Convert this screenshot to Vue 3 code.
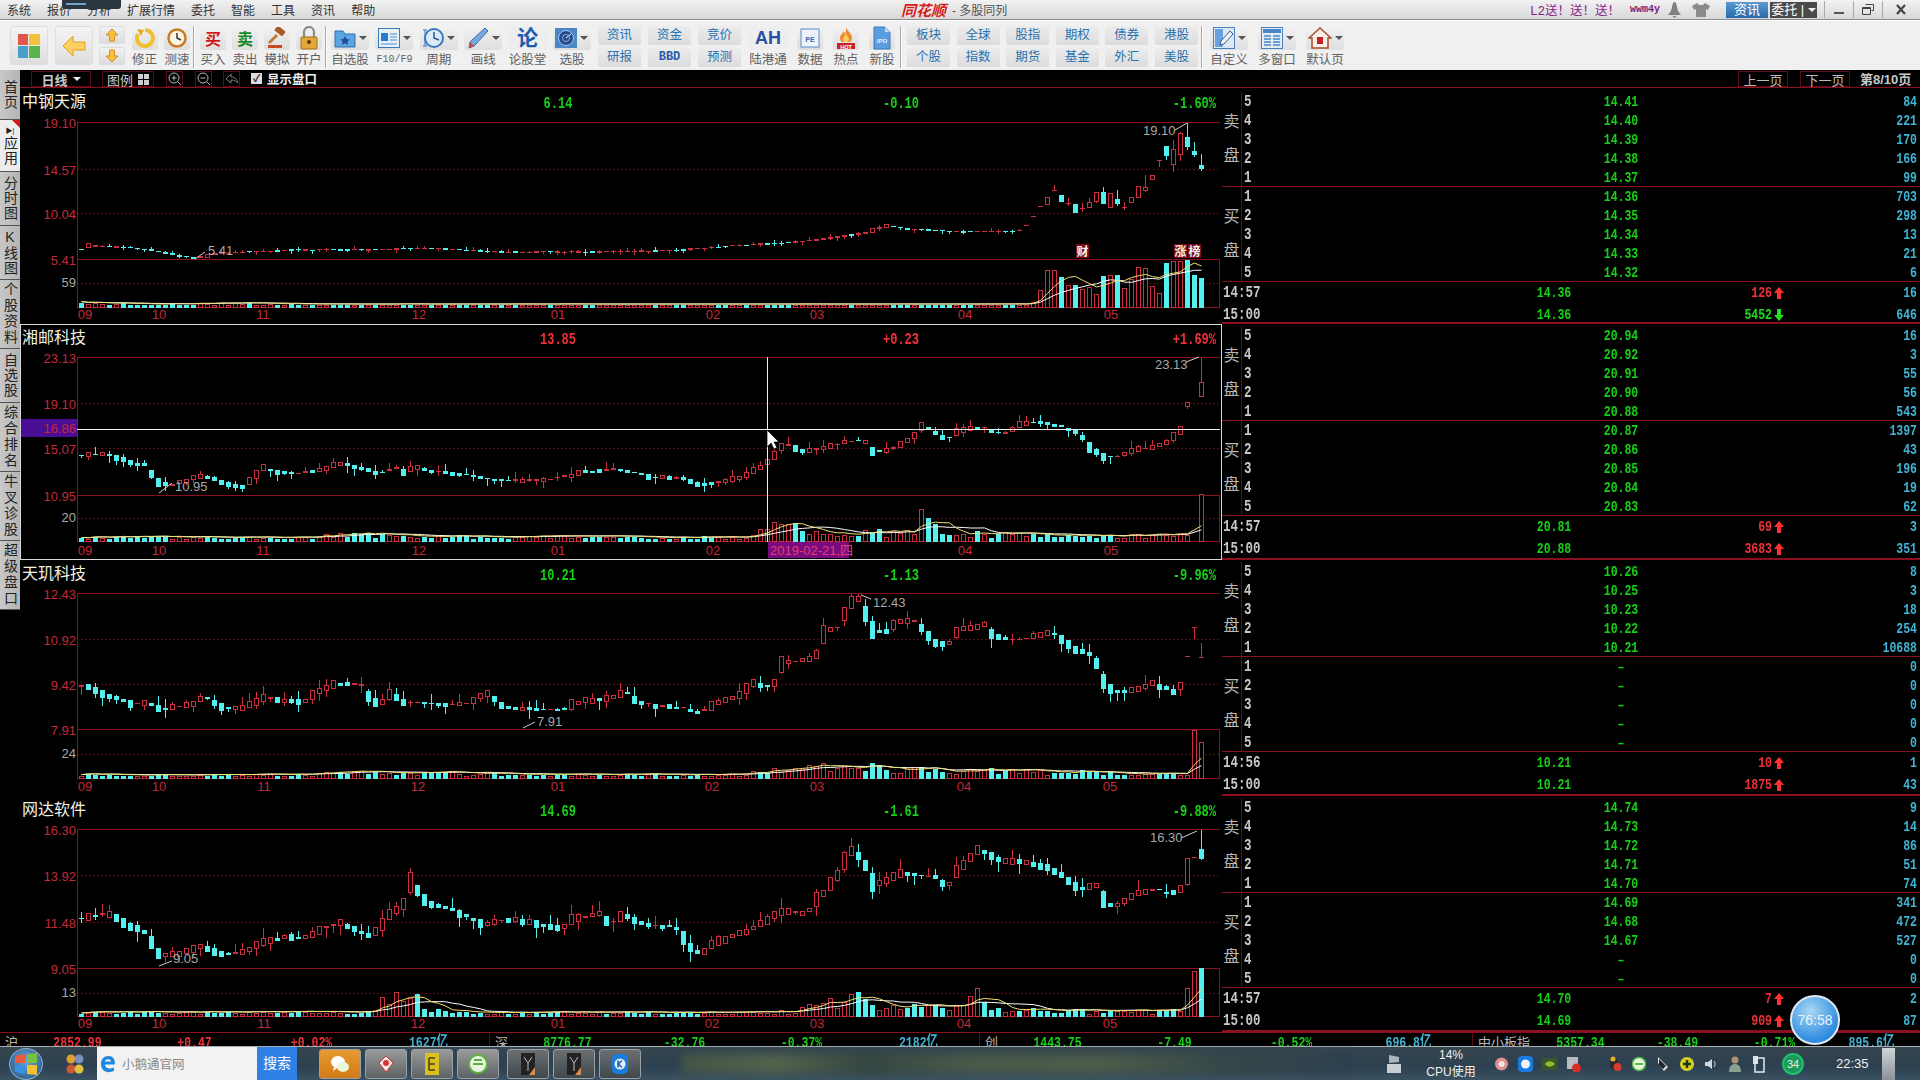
<script setup>
function rng(seed) {
  let s = seed
  return () => {
    s = (s * 16807) % 2147483647
    return (s % 100000) / 100000
  }
}
function interp(keys, x) {
  if (x <= keys[0][0]) return keys[0][1]
  for (let i = 1; i < keys.length; i++) {
    if (x <= keys[i][0]) {
      const [x0, y0] = keys[i - 1]
      const [x1, y1] = keys[i]
      return y0 + ((y1 - y0) * (x - x0)) / (x1 - x0)
    }
  }
  return keys[keys.length - 1][1]
}
const zk = (list, top) => list.map(([zx, zy]) => [20 + zx / 1.296, top + zy / 3])
const zc = (x, o, c, hi, lo) => ({ x, o: 80 + o / 3, c: 80 + c / 3, hi: 80 + hi / 3, lo: 80 + lo / 3 })

const defs = [
  {
    name: '中钢天源', last: '6.14', chg: '-0.10', pct: '-1.60%', tone: 'g', seed: 11, top: 88,
    grid: [122, 169, 213, 259, 283, 307], dateY: 319,
    labels: ['19.10', '14.57', '10.04', '5.41'], volLabel: '59',
    jit: 0.6, body: 1.6, wick: 3, end: 1020,
    keys: [[81, 249], [88, 245], [130, 248], [150, 250], [170, 254], [195, 258], [220, 253], [250, 252], [300, 250], [350, 250], [400, 249], [430, 248], [500, 252], [600, 252], [680, 250], [747, 245], [800, 242], [860, 234], [888, 225], [906, 229], [960, 232], [1020, 231]],
    extra: [zc(1026, 437, 435, 435, 437), zc(1033, 411, 409, 409, 411), zc(1040, 381, 379, 379, 381), zc(1047, 372, 350, 350, 375), zc(1054, 332, 329, 315, 332), zc(1061, 345, 365, 345, 367), zc(1068, 372, 368, 355, 378), zc(1075, 373, 398, 373, 400), zc(1082, 388, 383, 370, 395), zc(1089, 382, 367, 355, 385), zc(1096, 362, 337, 335, 368), zc(1103, 335, 372, 320, 373), zc(1110, 382, 340, 340, 384), zc(1117, 358, 372, 330, 378), zc(1124, 383, 381, 365, 390), zc(1131, 367, 352, 350, 370), zc(1138, 350, 317, 317, 352), zc(1145, 329, 322, 285, 335), zc(1152, 298, 284, 284, 300), zc(1159, 243, 241, 241, 262), zc(1166, 198, 228, 198, 240), zc(1173, 252, 206, 180, 275), zc(1180, 222, 158, 155, 243), zc(1187, 172, 202, 130, 210), zc(1194, 213, 226, 187, 230), zc(1201, 256, 268, 222, 272)],
    vol: [[81, 3], [90, 6], [100, 5], [130, 2], [240, 3], [300, 1.5], [1026, 1.5], [1033, 5], [1040, 17], [1047, 37], [1054, 37], [1061, 30], [1068, 22], [1075, 22], [1082, 18], [1089, 20], [1096, 13], [1103, 31], [1110, 32], [1117, 32], [1124, 19], [1131, 28], [1138, 40], [1145, 39], [1152, 21], [1159, 14], [1166, 44], [1173, 46], [1180, 46], [1187, 47], [1194, 32], [1201, 29]],
    exactFrom: 1030,
    dates: [85, 159, 263, 419, 558, 713, 817, 965, 1111],
    annots: [
      { t: '5.41', x: 208, y: 255, l: [195, 259, 205, 252] },
      { t: '19.10', x: 1143, y: 135, l: [1175, 130, 1187, 123] }
    ],
    tags: [{ t: '财', x: 1076 }, { t: '涨', x: 1174 }, { t: '榜', x: 1188 }],
    tagY: 244,
    pad: 'first',
    asks: [['14.41', '84'], ['14.40', '221'], ['14.39', '170'], ['14.38', '166'], ['14.37', '99']],
    bids: [['14.36', '703'], ['14.35', '298'], ['14.34', '13'], ['14.33', '21'], ['14.32', '6']],
    trades: [['14:57', '14.36', '126', 'up', '16'], ['15:00', '14.36', '5452', 'down', '646']]
  },
  {
    name: '湘邮科技', last: '13.85', chg: '+0.23', pct: '+1.69%', tone: 'r', seed: 29, top: 324,
    grid: [357, 403, 448, 495, 518, 541], dateY: 555,
    labels: ['23.13', '19.10', '15.07', '10.95'], volLabel: '20',
    jit: 1.5, body: 3.5, wick: 7, end: 1180,
    keys: [[80, 455], [109, 454], [118, 458], [132, 463], [144, 465], [152, 475], [160, 485], [172, 485], [201, 475], [215, 480], [241, 488], [255, 475], [264, 467], [276, 472], [299, 473], [319, 470], [339, 463], [367, 470], [379, 473], [396, 467], [402, 473], [413, 467], [436, 472], [471, 475], [488, 479], [522, 481], [545, 480], [563, 477], [580, 472], [620, 469], [649, 477], [683, 478], [697, 485], [712, 483], [741, 477], [763, 465], [775, 455], [782, 445], [792, 445], [798, 452], [821, 448], [844, 442], [864, 440], [872, 452], [895, 448], [913, 437], [920, 425], [934, 433], [943, 438], [950, 437], [958, 430], [972, 428], [984, 428], [993, 432], [1006, 433], [1020, 423], [1034, 423], [1048, 423], [1062, 427], [1075, 433], [1082, 438], [1089, 447], [1103, 457], [1117, 457], [1130, 450], [1148, 448], [1165, 443], [1180, 430]],
    extra: [{ x: 1187, o: 406, c: 402, hi: 402, lo: 409 }, { x: 1201, o: 396, c: 382, hi: 358, lo: 396 }],
    vol: [[81, 3], [300, 3], [330, 5], [360, 6], [420, 4], [700, 3], [750, 5], [767, 14], [780, 22], [800, 12], [820, 6], [860, 9], [915, 7], [920, 25], [928, 17], [940, 8], [1000, 6], [1180, 5], [1187, 6], [1201, 47]],
    exactFrom: 1187,
    dates: [85, 159, 263, 419, 558, 713, 965, 1111],
    dateNames: ['09', '10', '11', '12', '01', '02', '04', '05'],
    annots: [
      { t: '10.95', x: 175, y: 491, l: [159, 493, 172, 483] },
      { t: '23.13', x: 1155, y: 369, l: [1186, 362, 1199, 357] }
    ],
    tags: [], tagY: 0, active: true,
    asks: [['20.94', '16'], ['20.92', '3'], ['20.91', '55'], ['20.90', '56'], ['20.88', '543']],
    bids: [['20.87', '1397'], ['20.86', '43'], ['20.85', '196'], ['20.84', '19'], ['20.83', '62']],
    trades: [['14:57', '20.81', '69', 'up', '3'], ['15:00', '20.88', '3683', 'up', '351']]
  },
  {
    name: '天玑科技', last: '10.21', chg: '-1.13', pct: '-9.96%', tone: 'g', seed: 47, top: 560,
    grid: [593, 639, 684, 729, 754, 778], dateY: 791,
    labels: ['12.43', '10.92', '9.42', '7.91'], volLabel: '24',
    jit: 2, body: 5, wick: 9, end: 1180,
    keys: zk([[80, 375], [100, 395], [125, 415], [145, 432], [165, 425], [180, 450], [205, 440], [225, 430], [240, 410], [260, 445], [285, 445], [315, 415], [345, 420], [365, 425], [385, 395], [405, 370], [425, 375], [440, 365], [450, 405], [465, 435], [480, 400], [495, 430], [520, 425], [550, 435], [580, 430], [605, 400], [625, 440], [655, 445], [690, 450], [705, 445], [720, 425], [760, 415], [785, 395], [800, 425], [830, 440], [860, 445], [880, 460], [900, 430], [930, 405], [950, 370], [975, 380], [985, 310], [1010, 300], [1030, 295], [1042, 210], [1060, 200], [1075, 130], [1087, 115], [1097, 170], [1105, 215], [1120, 215], [1140, 180], [1160, 180], [1175, 225], [1190, 260], [1205, 245], [1215, 210], [1250, 195], [1260, 230], [1295, 240], [1320, 220], [1340, 220], [1365, 270], [1385, 280], [1395, 315], [1404, 370], [1415, 395], [1440, 390], [1465, 370], [1485, 385], [1495, 395], [1505, 375]], 560),
    extra: [{ x: 1187, o: 656.5, c: 656, hi: 656, lo: 656.5 }, { x: 1194, o: 627.5, c: 627, hi: 627, lo: 639 }, { x: 1201, o: 658, c: 657, hi: 643, lo: 658 }],
    vol: [[81, 3], [116, 2], [305, 2.5], [352, 6], [400, 5], [560, 3], [637, 3], [714, 2], [745, 4], [776, 7], [815, 11], [850, 15], [885, 9], [985, 7], [1100, 5], [1180, 3], [1187, 3], [1194, 48], [1201, 36]],
    exactFrom: 1187,
    dates: [85, 159, 264, 418, 558, 712, 817, 964, 1110],
    annots: [
      { t: '12.43', x: 873, y: 607, l: [861, 595, 871, 599] },
      { t: '7.91', x: 537, y: 726, l: [523, 728, 535, 722] }
    ],
    tags: [], tagY: 0,
    asks: [['10.26', '8'], ['10.25', '3'], ['10.23', '18'], ['10.22', '254'], ['10.21', '10688']],
    bids: [['–', '0'], ['–', '0'], ['–', '0'], ['–', '0'], ['–', '0']],
    trades: [['14:56', '10.21', '10', 'up', '1'], ['15:00', '10.21', '1875', 'up', '43']]
  },
  {
    name: '网达软件', last: '14.69', chg: '-1.61', pct: '-9.88%', tone: 'g', seed: 83, top: 796,
    grid: [829, 875, 922, 968, 993, 1016], dateY: 1028,
    labels: ['16.30', '13.92', '11.48', '9.05'], volLabel: '13',
    jit: 2, body: 6, wick: 10, end: 1180,
    keys: zk([[80, 365], [115, 350], [130, 375], [145, 395], [160, 405], [170, 440], [180, 480], [210, 470], [235, 450], [260, 475], [295, 465], [310, 440], [345, 420], [365, 430], [385, 405], [415, 380], [435, 400], [455, 420], [470, 380], [480, 350], [495, 330], [505, 255], [515, 285], [525, 320], [550, 335], [585, 365], [600, 385], [640, 370], [660, 380], [700, 400], [715, 370], [750, 350], [765, 385], [780, 355], [800, 380], [850, 395], [860, 430], [870, 460], [880, 475], [900, 440], [940, 405], [965, 375], [985, 345], [1020, 348], [1032, 310], [1042, 285], [1060, 235], [1075, 155], [1085, 180], [1095, 210], [1105, 265], [1125, 250], [1140, 230], [1165, 235], [1185, 240], [1200, 275], [1215, 220], [1240, 160], [1250, 170], [1270, 195], [1300, 195], [1330, 215], [1350, 235], [1370, 280], [1395, 265], [1405, 320], [1420, 330], [1445, 290], [1480, 280], [1490, 300], [1503, 275]], 796),
    extra: [{ x: 1187, o: 884, c: 858, hi: 858, lo: 886 }, { x: 1194, o: 858, c: 857, hi: 857, lo: 858 }, { x: 1201, o: 849, c: 859, hi: 830, lo: 860 }],
    vol: [[81, 3], [365, 3], [375, 5], [386, 18], [405, 27], [415, 18], [425, 7], [450, 3], [770, 3], [800, 6], [835, 14], [850, 30], [860, 14], [880, 8], [925, 9], [960, 7], [977, 22], [985, 14], [1000, 7], [1100, 4], [1180, 5], [1187, 28], [1194, 45], [1201, 48]],
    exactFrom: 1187,
    dates: [85, 159, 264, 418, 558, 712, 817, 964, 1110],
    annots: [
      { t: '16.30', x: 1150, y: 842, l: [1181, 838, 1197, 831] },
      { t: '9.05', x: 173, y: 963, l: [159, 966, 172, 961] }
    ],
    tags: [], tagY: 0,
    asks: [['14.74', '9'], ['14.73', '14'], ['14.72', '86'], ['14.71', '51'], ['14.70', '74']],
    bids: [['14.69', '341'], ['14.68', '472'], ['14.67', '527'], ['–', '0'], ['–', '0']],
    trades: [['14:57', '14.70', '7', 'up', '2'], ['15:00', '14.69', '909', 'up', '87']]
  }
]
const monthNames = ['09', '10', '11', '12', '01', '02', '03', '04', '05']

function build(d) {
  const r = rng(d.seed)
  const candles = []
  let prev = interp(d.keys, 81)
  const floorY = d.grid[3] - 1
  for (let x = 81; x <= d.end; x += 7) {
    const y = interp(d.keys, x) + (r() - 0.5) * d.jit
    const dy = y - prev
    const mag = Math.abs(dy)
    const size = Math.max(1, mag * 0.8 + r() * d.body)
    let up = dy < 0
    if (mag < 1 && r() < 0.4) up = !up
    const top = y - size / 2
    const bot = y + size / 2
    const hi = Math.max(d.grid[0] + 1, top - (r() < 0.55 ? r() * d.wick : 0))
    const lo = Math.min(floorY, bot + (r() < 0.55 ? r() * d.wick : 0))
    candles.push({ x, top, bot, hi, lo, up })
    prev = y
  }
  for (const e of d.extra) {
    candles.push({ x: e.x, top: Math.min(e.o, e.c), bot: Math.max(e.o, e.c), hi: e.hi, lo: e.lo, up: e.c <= e.o })
  }
  const base = d.grid[5]
  const vols = candles.map((c) => {
    const raw = interp(d.vol, c.x)
    const h = c.x >= d.exactFrom ? raw : raw * (0.5 + r() * 1.0)
    return { x: c.x, h: Math.max(2, h), up: c.up }
  })
  const ma = (n) =>
    vols
      .map((v, i) => {
        const s = vols.slice(Math.max(0, i - n + 1), i + 1)
        const avg = s.reduce((a, b) => a + b.h, 0) / s.length
        return `${v.x + 0.5},${(base - avg - 1).toFixed(1)}`
      })
      .join(' ')
  const box = (c) => ({
    x: Math.round(c.x) - 2,
    y: Math.round(c.top),
    h: Math.max(1, Math.round(c.bot) - Math.round(c.top))
  })
  return {
    ...d,
    names: d.dateNames || monthNames,
    candles: candles.map((c) => ({ ...c, b: box(c), hiR: Math.round(c.hi), loR: Math.round(c.lo) })),
    vols: vols.map((v) => ({ ...v, y: Math.round(base - v.h), hR: Math.round(v.h) })),
    ma5: ma(5),
    ma10: ma(10),
    vb: `20 ${d.top + 34} 1202 202`
  }
}
const panels = defs.map(build)

const sideTabs = [
  { t: '首页' }, { t: '应用', on: true }, { t: '分时图' }, { t: 'K线图' },
  { t: '个股资料', tall: true }, { t: '自选股' }, { t: '综合排名', tall: true },
  { t: '牛叉诊股', tall: true }, { t: '超级盘口', tall: true }
]
const menus = ['系统', '报价', '分析', '扩展行情', '委托', '智能', '工具', '资讯', '帮助']
const indexes = [
  { k: 'seg', n: '沪', tone: 'r', v: ['2852.99', '+0.47', '+0.02%'], amt: '1627亿' },
  { k: 'seg', n: '深', tone: 'g', v: ['8776.77', '-32.76', '-0.37%'], amt: '2182亿' },
  { k: 'seg', n: '创', tone: 'g', v: ['1443.75', '-7.49', '-0.52%'], amt: '696.8亿' },
  { k: 'seg wide', n: '中小板指', tone: 'g', v: ['5357.34', '-38.49', '-0.71%'], amt: '895.6亿' }
]
const pairs1 = [['资讯', '研报'], ['资金', 'BBD'], ['竞价', '预测']]
const pairs2 = [['板块', '个股'], ['全球', '指数'], ['股指', '期货'], ['期权', '基金'], ['债券', '外汇'], ['港股', '美股']]
</script>

<template>
  <div class="app">
    <header class="titlebar">
      <nav class="menus"><span v-for="m in menus" :key="m">{{ m }}</span></nav>
      <div class="popbar"><i></i></div>
      <div class="brand"><b class="logo">同花顺</b><span>- 多股同列</span></div>
      <div class="promo">L2送！送！送！</div>
      <div class="user">wwm4y</div>
      <svg class="bell" width="15" height="18" viewBox="0 0 15 18"><path d="M7.5 1C9 1 9.5 3 10 6c.4 3 2 6 4 8H1c2-2 3.600-5 4-8 .5-3 1-5 2.500-5zM5.500 15h4l-2 2z" fill="#808080"/></svg>
      <svg class="shirt" width="20" height="16" viewBox="0 0 20 16"><path d="M6 1 1 4l2 4 2-1v8h10V7l2 1 2-4-5-3-2 2h-4z" fill="#8a8a8a"/></svg>
      <div class="tbtn blue">资讯</div>
      <div class="tbtn dark">委托 | <i class="tri white"></i></div>
      <div class="winbtns">
        <span class="wb"><i class="min"></i></span>
        <span class="wb"><svg width="12" height="11" viewBox="0 0 12 11"><path d="M3.500.5h8v6h-2M.5 3.500h8v7h-8zM.5 4.500h8" fill="none" stroke="#444"/></svg></span>
        <span class="wb close"><svg width="12" height="11" viewBox="0 0 12 11"><path d="M2 1l8 9M10 1l-8 9" stroke="#444" stroke-width="2.200"/></svg></span>
      </div>
    </header>

    <section class="toolbar">
      <div class="group g1">
        <div class="bigbtn"><svg width="22" height="24" viewBox="0 0 22 24"><rect x="0" width="10" height="11" fill="#e2564a"/><rect x="11" width="11" height="11" fill="#f0c23c"/><rect y="12" width="10" height="12" fill="#46a0c8"/><rect x="11" y="12" width="11" height="12" fill="#58b44c"/></svg></div>
        <div class="bigbtn"><svg width="24" height="22" viewBox="0 0 24 22"><path d="M11 1 1 11l10 10v-6h12V7H11z" fill="#fad160" stroke="#e0a020"/></svg></div>
        <div class="updown">
          <div class="ud"><svg width="14" height="14" viewBox="0 0 14 14"><path d="M7 1l6 6H9.500v6h-5V7H1z" fill="#f8c040" stroke="#d89020"/></svg></div>
          <div class="ud"><svg width="14" height="14" viewBox="0 0 14 14"><path d="M7 13 1 7h3.500V1h5v6H13z" fill="#f8c040" stroke="#d89020"/></svg></div>
        </div>
        <div class="tool nar"><div class="ico"><svg width="20" height="20" viewBox="0 0 20 20"><path d="M10 2a8 8 0 1 1-7 4" fill="none" stroke="#f0c030" stroke-width="4"/><path d="M2 1l7 1-3 6z" fill="#e8a820"/></svg></div><span class="lbl">修正</span></div>
        <div class="tool nar"><div class="ico"><svg width="20" height="20" viewBox="0 0 20 20"><circle cx="10" cy="10" r="8.500" fill="#fbf4e0" stroke="#c97a24" stroke-width="2.500"/><path d="M10 5v5l4 2" stroke="#333" stroke-width="1.500" fill="none"/></svg></div><span class="lbl">测速</span></div>
      </div>
      <i class="sep s1"></i>
      <div class="group g2">
        <div class="tool nar"><div class="ico glyph red">买</div><span class="lbl">买入</span></div>
        <div class="tool nar"><div class="ico glyph green">卖</div><span class="lbl">卖出</span></div>
        <div class="tool nar"><div class="ico"><svg width="22" height="22" viewBox="0 0 22 22"><rect x="9" y="1" width="10" height="6" rx="1" transform="rotate(40 14 4)" fill="#a85a24"/><path d="M11 8 3 16" stroke="#c07a3a" stroke-width="3"/><rect x="2" y="18" width="14" height="3" fill="#c84a20"/></svg></div><span class="lbl">模拟</span></div>
        <div class="tool nar"><div class="ico"><svg width="20" height="24" viewBox="0 0 20 24"><path d="M5 11V6a5 5 0 0 1 10 0v5" fill="none" stroke="#8a8a8a" stroke-width="2.200"/><rect x="2" y="11" width="16" height="12" rx="1" fill="#e2a838" stroke="#a06e18"/><circle cx="10" cy="16" r="2" fill="#5a3a10"/></svg></div><span class="lbl">开户</span></div>
      </div>
      <i class="sep s2"></i>
      <div class="group g3">
        <div class="tool wid"><div class="ico drop"><svg width="22" height="20" viewBox="0 0 22 20"><path d="M1 3h8l2 3h10v13H1z" fill="#5aa4e0" stroke="#2f70b0"/><path d="M11 8l1.500 3 3.200.4-2.300 2.200.6 3.200-3-1.600-3 1.600.6-3.200-2.300-2.200 3.200-.4z" fill="#1e4c9c"/></svg><i class="tri"></i></div><span class="lbl">自选股</span></div>
        <div class="tool wid"><div class="ico drop"><svg width="22" height="20" viewBox="0 0 22 20"><rect x=".5" y=".5" width="21" height="19" fill="#e8f0f8" stroke="#3a78b8"/><rect x="3" y="5" width="7" height="8" fill="#2a7ad0"/><path d="M12 6h7M12 9h7M12 12h7M3 16h16" stroke="#4a90d0"/></svg><i class="tri"></i></div><span class="lbl mono">F10/F9</span></div>
        <div class="tool wid"><div class="ico drop"><svg width="22" height="22" viewBox="0 0 22 22"><circle cx="12" cy="11" r="9" fill="#dceaf8" stroke="#3a78c0" stroke-width="2"/><path d="M12 5v6l5 2" stroke="#2a5a98" stroke-width="1.500" fill="none"/><path d="M1 3h4M3 3v16M1 19h4" stroke="#3a78c0"/></svg><i class="tri"></i></div><span class="lbl">周期</span></div>
        <div class="tool wid"><div class="ico drop"><svg width="22" height="22" viewBox="0 0 22 22"><path d="M18 1l3 3L7 19l-5 2 1-6z" fill="#78a8e0" stroke="#3a68a8"/><path d="M3 15l4 4-5 2z" fill="#d04a3a"/></svg><i class="tri"></i></div><span class="lbl">画线</span></div>
        <div class="tool wid"><div class="ico glyph lun">论</div><span class="lbl">论股堂</span></div>
        <div class="tool wid"><div class="ico drop"><svg width="22" height="20" viewBox="0 0 22 20"><rect width="22" height="20" fill="#4a86c8"/><circle cx="11" cy="10" r="7.500" fill="#2a4a88" stroke="#a0c8f0"/><path d="M11 10l5-4" stroke="#fff"/><circle cx="11" cy="10" r="3.500" fill="none" stroke="#7ab0e8"/></svg><i class="tri"></i></div><span class="lbl">选股</span></div>
      </div>
      <div class="group g4">
        <div v-for="p in pairs1" :key="p[0]" class="pair">
          <span class="pbtn">{{ p[0] }}</span>
          <span class="pbtn" :class="{ bbd: p[1] === 'BBD' }">{{ p[1] }}</span>
        </div>
      </div>
      <div class="group g5">
        <div class="tool wid"><div class="ico glyph ah">AH</div><span class="lbl">陆港通</span></div>
        <div class="tool nar"><div class="ico"><svg width="20" height="20" viewBox="0 0 20 20"><rect x="1" y="1" width="18" height="18" fill="#eef3fa" stroke="#5a8ac8"/><text x="10" y="14" class="pe">PE</text></svg></div><span class="lbl">数据</span></div>
        <div class="tool nar"><div class="ico"><svg width="20" height="24" viewBox="0 0 20 24"><path d="M10 1c1 4 6 6 6 11 0 2-1 3-2 4H6c-1-1-2-2-2-4 0-3 3-4 3-7 1 1 2 2 2 3 1-2 1-4 1-7z" fill="#ee8a30"/><path d="M10 7c0 3 3 4 3 6s-1 3-3 3-3-1-3-3 2-3 3-6z" fill="#f8d060"/><rect x="1" y="17" width="18" height="6" fill="#c8202a"/><text x="10" y="22.500" class="hot">HOT</text></svg></div><span class="lbl">热点</span></div>
        <div class="tool nar"><div class="ico"><svg width="20" height="24" viewBox="0 0 20 24"><path d="M2 1h11l5 5v17H2z" fill="#5a9ee0" stroke="#3a78c0"/><path d="M13 1v5h5" fill="#bcd8f4"/><text x="10" y="17" class="ipo">IPO</text></svg></div><span class="lbl">新股</span></div>
      </div>
      <i class="sep s3"></i>
      <div class="group g6">
        <div v-for="p in pairs2" :key="p[0]" class="pair">
          <span class="pbtn">{{ p[0] }}</span>
          <span class="pbtn">{{ p[1] }}</span>
        </div>
      </div>
      <i class="sep s4"></i>
      <div class="group g7">
        <div class="tool wid"><div class="ico drop"><svg width="22" height="22" viewBox="0 0 22 22"><rect x=".5" y=".5" width="21" height="21" fill="#dce8f4" stroke="#4a80c0"/><rect x="2" y="2" width="8" height="18" fill="#6aa0dc"/><path d="M17 4l3 3-9 10-4 1 1-4z" fill="#eef4fa" stroke="#3a5a88"/></svg><i class="tri"></i></div><span class="lbl">自定义</span></div>
        <div class="tool wid"><div class="ico drop"><svg width="22" height="22" viewBox="0 0 22 22"><rect x=".5" y=".5" width="21" height="21" fill="#e2ecf6" stroke="#4a80c0"/><rect x="2" y="2" width="18" height="4" fill="#4a86c8"/><path d="M3 9h7M3 12h7M3 15h7M3 18h7M12 9h7M12 12h7M12 15h7M12 18h7" stroke="#4a86c8" stroke-width="1.500"/></svg><i class="tri"></i></div><span class="lbl">多窗口</span></div>
        <div class="tool wid"><div class="ico drop"><svg width="24" height="22" viewBox="0 0 24 22"><path d="M12 1 1 11h3v10h16V11h3z" fill="#f4f0e8" stroke="#a84a30" stroke-width="1.500"/><rect x="9" y="10" width="6" height="7" fill="#c8202a"/></svg><i class="tri"></i></div><span class="lbl">默认页</span></div>
      </div>
    </section>

    <div class="workspace">
      <aside class="side">
        <div v-for="s in sideTabs" :key="s.t" class="stab" :class="{ on: s.on, tall: s.tall }">
          <i v-if="s.on" class="play">▶|</i>
          <span>{{ s.t }}</span>
        </div>
      </aside>
      <main class="main">
        <div class="tabbar">
          <div class="tb day">日线 <i class="tri white"></i></div>
          <div class="tb legend">图例 <svg width="11" height="11" viewBox="0 0 11 11"><path d="M0 0h5v5H0zM6 0h5v5H6zM0 6h5v5H0zM6 6h5v5H6z" fill="#cfcfcf"/></svg></div>
          <div class="tb sq zi"><svg width="14" height="14" viewBox="0 0 14 14"><circle cx="6" cy="6" r="5" fill="none" stroke="#b8b8b8"/><path d="M10 10l3 3M3.500 6h5M6 3.500v5" stroke="#b8b8b8"/></svg></div>
          <div class="tb sq zo"><svg width="14" height="14" viewBox="0 0 14 14"><circle cx="6" cy="6" r="5" fill="none" stroke="#b8b8b8"/><path d="M10 10l3 3M3.500 6h5" stroke="#b8b8b8"/></svg></div>
          <div class="tb sq zb"><svg width="14" height="12" viewBox="0 0 14 12"><path d="M6 1 1 6l5 4V7c3 0 5 1 7 3-1-4-3-6-7-6z" fill="none" stroke="#808080"/></svg></div>
          <label class="showbook"><i class="check">✓</i>显示盘口</label>
          <div class="pager">
            <div class="tb pg">上一页</div>
            <div class="tb pg">下一页</div>
            <b class="pageno">第8/10页</b>
          </div>
        </div>

        <div v-for="p in panels" :key="p.name" class="panel">
          <div class="chart" :class="{ active: p.active }">
            <div class="chead">
              <span class="sname">{{ p.name }}</span>
              <span class="cc" :class="p.tone"><em class="num">{{ p.last }}</em></span>
              <span class="cc" :class="p.tone"><em class="num">{{ p.chg }}</em></span>
              <span class="pct" :class="p.tone"><em class="num">{{ p.pct }}</em></span>
            </div>
            <svg class="plot" width="1202" height="202" :viewBox="p.vb">
              <g class="crisp">
                <line x1="77" x2="1220" :y1="p.grid[0] + .5" :y2="p.grid[0] + .5" class="ln" />
                <line x1="77" x2="1220" :y1="p.grid[1] + .5" :y2="p.grid[1] + .5" class="dash" />
                <line x1="77" x2="1220" :y1="p.grid[2] + .5" :y2="p.grid[2] + .5" class="dash" />
                <line x1="77" x2="1220" :y1="p.grid[3] + .5" :y2="p.grid[3] + .5" class="ln" />
                <line x1="77" x2="1220" :y1="p.grid[4] + .5" :y2="p.grid[4] + .5" class="dash" />
                <line x1="77" x2="1220" :y1="p.grid[5] + .5" :y2="p.grid[5] + .5" class="ln" />
                <line x1="77.500" x2="77.500" :y1="p.grid[0]" :y2="p.grid[5]" class="ln" />
                <line x1="1219.500" x2="1219.500" :y1="p.grid[3]" :y2="p.grid[5]" class="ln" />
              </g>
              <text v-for="(l, i) in p.labels" :key="l" class="axis" x="76" :y="p.grid[i] + 6">{{ l }}</text>
              <text class="axis grey" x="76" :y="p.grid[4] + 4">{{ p.volLabel }}</text>
              <g class="crisp">
                <g v-for="c in p.candles" :key="c.x">
                  <line :x1="c.x + .5" :x2="c.x + .5" :y1="c.hiR" :y2="c.loR" :class="c.up ? 'wr' : 'wc'" />
                  <rect v-if="c.up && c.b.h > 2" :x="c.b.x + .5" :y="c.b.y + .5" width="4" :height="c.b.h" class="hollow" />
                  <rect v-else :x="c.b.x" :y="c.b.y" width="5" :height="c.b.h" :class="c.up ? 'fr' : 'fc'" />
                </g>
                <g v-for="v in p.vols" :key="'v' + v.x">
                  <rect v-if="v.up" :x="v.x - 1.500" :y="v.y + .5" width="4" :height="v.hR" class="hollow" />
                  <rect v-else :x="v.x - 2" :y="v.y" width="5" :height="v.hR + 1" class="fc" />
                </g>
              </g>
              <polyline :points="p.ma10" class="ma white" />
              <polyline :points="p.ma5" class="ma yellow" />
              <text v-for="(d, i) in p.dates" :key="'d' + i" class="date" :x="d" :y="p.dateY">{{ p.names[i] }}</text>
              <g v-for="a in p.annots" :key="a.t">
                <line :x1="a.l[0]" :y1="a.l[1]" :x2="a.l[2]" :y2="a.l[3]" class="ann" />
                <text class="anntext" :x="a.x" :y="a.y">{{ a.t }}</text>
              </g>
              <g v-for="t in p.tags" :key="t.t">
                <rect :x="t.x" :y="p.tagY" width="13" height="14" class="tagbg" />
                <text class="tagt" :x="t.x + 6.500" :y="p.tagY + 12">{{ t.t }}</text>
              </g>
              <template v-if="p.active">
                <rect x="20" y="419" width="57" height="18" class="purple" />
                <text class="axis" x="76" y="433">16.86</text>
                <line x1="77" x2="1220" y1="429.500" y2="429.500" class="cross" />
                <line x1="767.500" x2="767.500" y1="357" y2="542" class="cross" />
                <rect x="768" y="542" width="81" height="16" class="magenta" />
                <text class="pdate" x="770" y="555">2019-02-21,四</text>
                <path d="M767 430v17l4-4 3 6 3-1.500-3-5.500h5z" class="cursor" />
              </template>
            </svg>
          </div>
          <div class="book">
            <div class="orders" :class="{ first: p.pad === 'first' }">
              <div class="side-block">
                <div class="cap"><span>卖</span><span>盘</span></div>
                <div class="rows">
                  <div v-for="(r, i) in p.asks" :key="i" class="row">
                    <em class="num w">{{ 5 - i }}</em><em class="num g prc">{{ r[0] }}</em><em class="num c qty">{{ r[1] }}</em>
                  </div>
                </div>
              </div>
              <div class="side-block buy">
                <div class="cap"><span>买</span><span>盘</span></div>
                <div class="rows">
                  <div v-for="(r, i) in p.bids" :key="i" class="row">
                    <em class="num w">{{ i + 1 }}</em><em class="num g prc">{{ r[0] }}</em><em class="num c qty">{{ r[1] }}</em>
                  </div>
                </div>
              </div>
            </div>
            <div class="trades">
              <div v-for="t in p.trades" :key="t[0]" class="trow">
                <em class="num w time">{{ t[0] }}</em>
                <em class="num g prc">{{ t[1] }}</em>
                <span class="tvol">
                  <em class="num" :class="t[3] === 'up' ? 'r' : 'lg'">{{ t[2] }}</em>
                  <svg width="10" height="12" viewBox="0 0 10 12"><path :d="t[3] === 'up' ? 'M5 0l5 6H7v6H3V6H0z' : 'M5 12 0 6h3V0h4v6h3z'" :fill="t[3] === 'up' ? '#ff3030' : '#20e020'" /></svg>
                </span>
                <em class="num c qty">{{ t[4] }}</em>
              </div>
            </div>
          </div>
        </div>
      </main>
    </div>

    <div class="indexbar">
      <div v-for="ix in indexes" :key="ix.n" :class="ix.k">
        <span class="ixname">{{ ix.n }}</span>
        <em v-for="v in ix.v" :key="v" class="num ixv" :class="ix.tone">{{ v }}</em>
        <em class="num ixv c">{{ ix.amt }}</em>
      </div>
    </div>

    <footer class="taskbar">
      <div class="orb"><svg width="26" height="26" viewBox="0 0 26 26"><path d="M2 5l10-2v9H2z" fill="#e85a3a"/><path d="M14 3l10-1v10H14z" fill="#7ac040"/><path d="M2 14h10v9l-10-2z" fill="#3a90e0"/><path d="M14 14h10v10l-10-1z" fill="#f0c030"/></svg></div>
      <svg class="pin" width="18" height="24" viewBox="0 0 18 24"><circle cx="5" cy="7" r="4.500" fill="#e0a030"/><circle cx="13" cy="7" r="4.500" fill="#7a90c0"/><circle cx="5" cy="17" r="4.500" fill="#d05a30"/><circle cx="13" cy="17" r="4.500" fill="#e0c040"/></svg>
      <div class="search">
        <svg width="20" height="22" viewBox="0 0 20 22"><path d="M3 11c0-5 3-8 7.500-8S17 6 17 11.500H7c.2 4 4.500 5 9 3v3.500c-7 3-13 0-13-7z" fill="#1e88e0"/><path d="M7 8.500h6c0-3-6-3-6 0z" fill="#f2f2f2"/></svg>
        <span>小鹅通官网</span>
      </div>
      <div class="searchbtn">搜索</div>
      <div class="quicks">
        <div class="qbtn orange"><svg width="20" height="18" viewBox="0 0 20 18"><ellipse cx="8" cy="7" rx="7" ry="6" fill="#fff"/><ellipse cx="13" cy="12" rx="6" ry="5" fill="#e8f8d8"/><path d="M4 12l-1 4 4-3z" fill="#fff"/></svg></div>
        <div class="qbtn"><svg width="20" height="22" viewBox="0 0 20 22"><path d="M10 3l7 7-7 9-7-9z" fill="#f4e8e8" stroke="#d03838"/><circle cx="10" cy="10" r="3" fill="#d03838"/></svg></div>
        <div class="qbtn"><svg width="14" height="22" viewBox="0 0 14 22"><rect width="14" height="22" fill="#d8c020"/><path d="M4 5h6M4 11h6M4 17h6M4 5v12" stroke="#4a4210" stroke-width="1.500" fill="none"/></svg></div>
        <div class="qbtn green"><svg width="20" height="20" viewBox="0 0 20 20"><circle cx="10" cy="10" r="9" fill="#e8f4e0" stroke="#58b040" stroke-width="2"/><path d="M5 10h10M6 6h8" stroke="#58b040" stroke-width="2"/></svg></div>
        <div class="qbtn dim"><svg width="14" height="22" viewBox="0 0 14 22"><rect width="14" height="22" fill="#222"/><path d="M3 4l4 6 4-6M7 10v8" stroke="#bbb" fill="none"/><path d="M8 22l6-8v8z" fill="#d88a50"/></svg></div>
        <div class="qbtn dim"><svg width="14" height="22" viewBox="0 0 14 22"><rect width="14" height="22" fill="#222"/><path d="M3 4l4 6 4-6M7 10v8" stroke="#bbb" fill="none"/><path d="M8 22l6-8v8z" fill="#d88a50"/></svg></div>
        <div class="qbtn dim"><svg width="18" height="22" viewBox="0 0 18 22"><rect x="1" y="1" width="16" height="20" rx="5" fill="#1a7be0"/><circle cx="9" cy="11" r="5.500" fill="#e8f0fa"/><path d="M7 7.500v7M11 7.500 7.500 11l3.500 3.500" stroke="#1a5cb0" stroke-width="1.500" fill="none"/></svg></div>
      </div>
      <div class="smear"></div>
      <svg class="kbd" width="16" height="20" viewBox="0 0 16 20"><path d="M3 1l10 2v5l-10 1z" fill="#aab4ba"/><rect x="1" y="10" width="14" height="9" fill="#c8cfd4"/></svg>
      <div class="cpu"><span>14%</span><span>CPU使用</span></div>
      <div class="trayA">
        <svg width="15" height="18" viewBox="0 0 15 18"><circle cx="7.500" cy="9" r="6.500" fill="#e09090"/><circle cx="7.500" cy="9" r="3" fill="#f4e4e4"/></svg>
        <svg width="15" height="18" viewBox="0 0 15 18"><rect y="1" width="15" height="16" rx="4" fill="#1a7be0"/><circle cx="7.500" cy="9" r="4.500" fill="#eef4fc"/></svg>
        <svg width="15" height="18" viewBox="0 0 15 18"><rect y="3" width="15" height="12" fill="#39552a"/><path d="M3 9c3-4 7-3 10 0-3 3-7 4-10 0z" fill="#8fc030"/></svg>
        <svg width="15" height="18" viewBox="0 0 15 18"><rect x="1" y="2" width="11" height="12" fill="#b8bcc0"/><circle cx="10.500" cy="13" r="4.500" fill="#d03028"/></svg>
      </div>
      <div class="trayB">
        <svg width="14" height="18" viewBox="0 0 14 18"><ellipse cx="6" cy="9" rx="4" ry="6" fill="#2a2a2a"/><circle cx="9.500" cy="12" r="4" fill="#d83a30"/><circle cx="5" cy="4" r="2.500" fill="#e8b020"/></svg>
        <svg width="14" height="18" viewBox="0 0 14 18"><circle cx="7" cy="9" r="6.500" fill="#e8f4e0" stroke="#58b84a" stroke-width="1.500"/><path d="M3 9h8" stroke="#58b84a" stroke-width="2"/></svg>
        <svg width="14" height="18" viewBox="0 0 14 18"><path d="M2 2l10 10-4 4L2 8z" fill="#e0e4e8"/><path d="M3 4l7 7-3 3-4-4z" fill="#222"/></svg>
        <svg width="14" height="18" viewBox="0 0 14 18"><circle cx="7" cy="9" r="7" fill="#d8d020"/><path d="M3 9h8M7 5v8" stroke="#1a3a10" stroke-width="2.500"/></svg>
        <svg width="14" height="18" viewBox="0 0 14 18"><path d="M1 7h3l4-3v10l-4-3H1z" fill="#d0d8de"/><path d="M10 6c1.500 2 1.500 4 0 6" stroke="#d0d8de" fill="none"/></svg>
        <svg width="14" height="18" viewBox="0 0 14 18"><circle cx="7" cy="5" r="3.500" fill="#b09070"/><path d="M1 17c0-6 3-8 6-8s6 2 6 8z" fill="#8aa090"/></svg>
        <svg width="14" height="18" viewBox="0 0 14 18"><rect x="3" y="3" width="9" height="14" fill="none" stroke="#e4e8ec" stroke-width="1.500"/><rect x="1" y="1" width="5" height="8" fill="#dfe4e8"/></svg>
      </div>
      <div class="badge">34</div>
      <div class="clock">22:35</div>
      <div class="showdesk"></div>
    </footer>
    <div class="float">76:58</div>
  </div>
</template>

<style scoped>
.app { width: 1920px; height: 1080px; background: #000; display: flex; flex-direction: column; overflow: hidden; position: relative; font-family: "Liberation Sans", "Noto Sans CJK SC", sans-serif; }
em { font-style: normal; }
.num { font-family: "Liberation Mono", "Noto Sans CJK SC", monospace; font-size: 11.500px; font-weight: 700; display: inline-block; transform: scaleY(1.35); line-height: 14px; }
.g { color: #16d016; }
.lg { color: #20d820; }
.r { color: #f03038; }
.c { color: #3fb4d4; }
.w { color: #c8c8c8; }

.titlebar { height: 20px; flex: none; display: flex; align-items: center; position: relative; background: linear-gradient(#f2f2f2, #d8d8d8); border-bottom: 1px solid #8c8c8c; box-sizing: border-box; font-size: 12px; color: #333; }
.menus { display: flex; gap: 16px; padding-left: 7px; width: 890px; flex: none; box-sizing: border-box; }
.popbar { position: absolute; left: 62px; top: 0; width: 59px; height: 9px; background: #2c3640; border-radius: 0 0 3px 3px; }
.popbar i { position: absolute; left: 4px; top: 3px; width: 20px; height: 2px; background: #6aa8c8; }
.brand { display: flex; align-items: center; gap: 6px; margin-left: 11px; color: #555; width: 629px; flex: none; }
.logo { color: #d02020; font-style: italic; font-size: 15px; font-weight: 700; letter-spacing: 0; text-shadow: 0 0 1px #fff; }
.promo { color: #8a1a8a; width: 100px; flex: none; font-size: 12.500px; font-family: "Liberation Mono", "Noto Sans CJK SC", monospace; white-space: nowrap; }
.user { color: #7a1a7a; font-family: "Liberation Mono", monospace; font-size: 10px; width: 37px; flex: none; font-weight: 700; }
.bell { margin-right: 9px; flex: none; }
.shirt { margin-right: 15px; flex: none; }
.tbtn { height: 16px; line-height: 16px; text-align: center; color: #fff; font-size: 13px; flex: none; }
.tbtn.blue { width: 42px; background: linear-gradient(#5a9ad0, #2a68a8); margin-right: 2px; }
.tbtn.dark { width: 47px; background: #4a4a4a; margin-right: 7px; }
.tri { display: inline-block; width: 0; height: 0; border: 4px solid transparent; border-top: 4px solid #555; border-bottom: 0; vertical-align: middle; }
.tri.white { border-top-color: #eee; }
.winbtns { display: flex; height: 17px; }
.wb { width: 28px; display: flex; align-items: center; justify-content: center; border-left: 1px solid #aaa; }
.wb.close { width: 36px; }
.min { width: 10px; height: 2px; background: #555; margin-top: 6px; }

.toolbar { height: 50px; flex: none; background: #f0f0f0; display: flex; align-items: flex-start; padding-top: 5px; box-sizing: border-box; border-top: 1px solid #fff; }
.group { display: flex; justify-content: space-between; flex: none; }
.g1 { margin-left: 10px; width: 180px; }
.g2 { margin-left: 5px; width: 122px; }
.g3 { margin-left: 4px; width: 260px; }
.g4 { margin-left: 7px; width: 143px; }
.g5 { margin-left: 8px; width: 146px; }
.g6 { margin-left: 5px; width: 291px; }
.g7 { margin-left: 7px; width: 134px; }
.sep { width: 2px; height: 42px; flex: none; border-left: 1px solid #aaa; border-right: 1px solid #fff; box-sizing: border-box; margin-left: 3px; }
.s3 { margin-left: 5px; }
.bigbtn { width: 38px; height: 39px; display: flex; align-items: center; justify-content: center; background: linear-gradient(#f4f4f4, #dedede); border: 1px solid #ddd; border-radius: 3px; box-sizing: border-box; }
.updown { display: flex; flex-direction: column; gap: 3px; width: 26px; }
.ud { height: 18px; background: linear-gradient(#f2f2f2, #dcdcdc); border: 1px solid #ddd; border-radius: 2px; display: flex; align-items: center; justify-content: center; box-sizing: border-box; }
.tool { display: flex; flex-direction: column; align-items: center; }
.tool.nar { width: 26px; }
.tool.wid { width: 38px; }
.ico { width: 100%; height: 24px; background: linear-gradient(#f2f2f2, #dedede); border-radius: 3px; display: flex; align-items: center; justify-content: center; gap: 3px; overflow: hidden; }
.lbl { font-size: 12.500px; line-height: 16px; margin-top: 2px; color: #606060; white-space: nowrap; }
.lbl.mono { font-family: "Liberation Mono", monospace; font-size: 10px; }
.glyph { font-weight: 700; }
.glyph.red { color: #d01818; font-size: 16px; }
.glyph.green { color: #148a2a; font-size: 16px; }
.glyph.lun { color: #1e5cb0; font-size: 21px; line-height: 24px; background: #eeeeee; }
.glyph.ah { color: #2a4ea0; font-size: 18px; background: #eeeeee; }
.pair { width: 43px; display: flex; flex-direction: column; gap: 3px; }
.pbtn { height: 19px; line-height: 19px; text-align: center; background: linear-gradient(#ececec, #dcdcdc); border-radius: 2px; color: #2a72b0; font-size: 12.500px; }
.pbtn.bbd { font-weight: 700; color: #2a5ca8; font-family: "Liberation Mono", monospace; font-size: 12px; }
.pe { font: 700 8px "Liberation Mono", monospace; fill: #3a70b0; text-anchor: middle; }
.hot { font: 700 5.500px "Liberation Sans", sans-serif; fill: #fff; text-anchor: middle; }
.ipo { font: 700 6px "Liberation Sans", sans-serif; fill: #e8f2fc; text-anchor: middle; }

.workspace { flex: none; height: 962px; display: flex; }
.side { width: 20px; flex: none; display: flex; flex-direction: column; }
.stab { height: 54px; flex: none; background: linear-gradient(90deg, #c8c8c8, #b4b4b4); border-bottom: 1px solid #555; box-sizing: border-box; display: flex; flex-direction: column; align-items: center; justify-content: center; color: #222; font-size: 14px; position: relative; }
.stab span { writing-mode: vertical-rl; text-orientation: upright; line-height: 20px; letter-spacing: 1px; white-space: nowrap; }
.stab:first-child { height: 50px; }
.stab.tall { height: 69px; }
.stab.tall span { letter-spacing: 2px; }
.stab.on { height: 52px; background: #ececec; color: #222; }
.stab.on::after { content: ""; position: absolute; right: 0; top: 0; border-left: 8px solid transparent; border-top: 8px solid #d01818; }
.play { font-style: normal; font-size: 7px; line-height: 10px; color: #222; }
.main { width: 1900px; display: flex; flex-direction: column; }
.tabbar { height: 18px; flex: none; display: flex; align-items: flex-start; position: relative; border-bottom: 1px solid #8a1020; box-sizing: border-box; color: #c8c8c8; font-size: 13px; }
.tb { height: 16px; border: 1px solid #5a0c18; box-sizing: border-box; display: flex; align-items: center; justify-content: center; gap: 5px; margin-top: 1px; }
.day { width: 60px; margin-left: 11px; font-weight: 700; }
.legend { width: 52px; margin-left: 11px; }
.sq { width: 17px; }
.zi { margin-left: 12px; }
.zo { margin-left: 12px; }
.zb { margin-left: 11px; }
.showbook { margin-left: 11px; display: flex; align-items: center; gap: 5px; font-weight: 700; color: #f0f0f0; font-size: 12.500px; height: 17px; }
.check { width: 11px; height: 11px; background: #ddd; color: #111; font-size: 10px; line-height: 11px; text-align: center; font-style: normal; }
.pager { position: absolute; right: 9px; top: 0; display: flex; align-items: flex-start; }
.pg { width: 50px; margin-right: 12px; font-size: 13px; color: #bbb; }
.pageno { font-size: 13px; margin-left: -2px; width: 51px; color: #c8c8c8; white-space: nowrap; line-height: 19px; }

.panel { height: 236px; flex: none; display: flex; }
.chart { width: 1202px; flex: none; display: flex; flex-direction: column; position: relative; }
.chart.active { outline: 1px solid #d8d8d8; outline-offset: -1px; z-index: 2; }
.chead { height: 34px; flex: none; display: grid; grid-template-columns: 368px 340px 346px 1fr; align-items: center; padding: 0 6px 6px 0; box-sizing: border-box; }
.sname { color: #f2f2e0; font-size: 16px; line-height: 20px; padding-left: 2px; }
.cc { text-align: center; }
.pct { text-align: right; }
.chead .num { font-size: 12px; }
.plot { display: block; overflow: visible; flex: none; }
.crisp { shape-rendering: crispEdges; }
.ln { stroke: #8a1020; stroke-width: 1; }
.dash { stroke: #5c0c14; stroke-width: 1; stroke-dasharray: 2 2; }
.axis { font-size: 13px; fill: #c4283a; text-anchor: end; font-family: "Liberation Sans", sans-serif; }
.axis.grey { fill: #a8a8a8; }
.date { font-size: 13px; fill: #c4283a; text-anchor: middle; font-family: "Liberation Sans", sans-serif; }
.wr { stroke: #cc3040; }
.wc { stroke: #54f0f0; }
.fr { fill: #cc3040; }
.fc { fill: #54f0f0; }
.hollow { fill: #000; stroke: #cc3040; stroke-width: 1; }
.ma { fill: none; stroke-width: 1; }
.ma.white { stroke: #ffffff; }
.ma.yellow { stroke: #f0e070; }
.ann { stroke: #d0d0d0; stroke-width: 1; }
.anntext { fill: #a8a8a8; font-size: 13px; font-family: "Liberation Sans", sans-serif; }
.tagbg { fill: #7a0a14; }
.tagt { fill: #f4f4f4; font-size: 12px; font-weight: 700; text-anchor: middle; font-family: "Noto Sans CJK SC", sans-serif; }
.purple { fill: #4a0e96; }
.cross { stroke: #f0f0f0; stroke-width: 1; shape-rendering: crispEdges; }
.magenta { fill: #7a0a80; }
.pdate { fill: #e04070; font-size: 13px; font-family: "Liberation Sans", "Noto Sans CJK SC", sans-serif; }
.cursor { fill: #fff; stroke: #000; stroke-width: .7; }

.book { flex: 1; display: flex; flex-direction: column; border-bottom: 2px solid #8a1020; box-sizing: border-box; }
.orders { padding-top: 2px; flex: none; }
.orders.first { padding-top: 4px; }
.side-block { display: flex; height: 95px; border-bottom: 1px solid #8a1020; box-sizing: border-box; }
.cap { width: 19px; flex: none; display: flex; flex-direction: column; justify-content: center; align-items: center; gap: 18px; color: #b8b8b8; font-size: 16px; line-height: 16px; border-right: 1px solid #5c0c14; }
.rows { flex: 1; display: flex; flex-direction: column; }
.row { height: 19px; flex: none; display: grid; grid-template-columns: 277px 200px 1fr; align-items: center; padding: 0 3px 0 2px; }
.row .w, .trow .time { font-size: 12.500px; }
.prc { text-align: center; }
.qty { text-align: right; }
.trades { margin-top: auto; height: 42px; }
.trow { height: 22px; display: grid; grid-template-columns: 231px 200px 130px 1fr; align-items: center; padding: 0 3px 0 1px; }
.tvol { display: flex; justify-content: flex-end; align-items: center; gap: 2px; }

.indexbar { height: 14px; flex: none; display: flex; border-top: 1px solid #8a1020; box-sizing: border-box; overflow: hidden; }
.seg { width: 490px; flex: none; display: grid; grid-template-columns: 19px repeat(4, 117px); border-right: 1px solid #5c0c14; box-sizing: border-box; padding-top: 3px; }
.seg.wide { width: 447px; grid-template-columns: 59px repeat(4, 97px); border-right: 0; }
.seg:nth-child(3) { width: 493px; }
.ixname { color: #bbb; font-size: 13px; line-height: 14px; white-space: nowrap; padding-left: 5px; }
.ixv { text-align: center; }

.taskbar { height: 34px; flex: none; display: flex; align-items: center; background: linear-gradient(#36454e, #2c4050 60%, #3a5262); border-top: 1px solid #a4adb2; box-sizing: border-box; position: relative; }
.orb { width: 34px; height: 32px; margin-left: 9px; border-radius: 50%; background: radial-gradient(circle at 50% 40%, #6aa8d8, #1e4e80); display: flex; align-items: center; justify-content: center; flex: none; border: 1px solid #8ab0cc; box-sizing: border-box; }
.pin { margin-left: 23px; flex: none; }
.search { width: 160px; margin-left: 13px; height: 33px; background: #f2f2f2; display: flex; align-items: center; gap: 4px; flex: none; padding-left: 1px; box-sizing: border-box; color: #888; font-size: 12.500px; }
.searchbtn { width: 40px; height: 33px; line-height: 33px; background: #2f80e4; color: #fff; font-size: 14px; text-align: center; flex: none; }
.quicks { display: flex; gap: 4px; margin-left: 22px; flex: none; }
.qbtn { width: 42px; height: 30px; border-radius: 3px; border: 1px solid #9aa0a4; box-sizing: border-box; display: flex; align-items: center; justify-content: center; background: linear-gradient(#9a9a9a, #5c6264); }
.qbtn.orange { background: linear-gradient(#e89a30, #d07a18); }
.qbtn.green { margin-right: 4px; }
.qbtn.dim { background: linear-gradient(#6a7072, #3f484c); }
.smear { width: 669px; height: 20px; margin-left: 41px; flex: none; background: linear-gradient(90deg, #4a5a44, #5c6c4c 14%, #39483e 28%, #4f5f48 42%, #566448 62%, #3a4a46 80%, #2e4050); filter: blur(4px); opacity: .8; }
.kbd { margin-left: 35px; flex: none; }
.cpu { width: 70px; margin-left: 14px; display: flex; flex-direction: column; align-items: center; color: #f0f0f0; font-size: 12px; line-height: 17px; flex: none; }
.trayA, .trayB { display: flex; flex: none; align-items: center; }
.trayA { gap: 9px; margin-left: 8px; }
.trayB { gap: 10px; margin-left: 27px; }
.badge { width: 22px; height: 22px; border-radius: 50%; background: #1d9a58; border: 2px solid #20c070; box-sizing: border-box; color: #e8f0e8; font-size: 11px; line-height: 18px; text-align: center; margin-left: 16px; flex: none; }
.clock { color: #f0f0f0; font-size: 13px; margin-left: 32px; width: 40px; flex: none; }
.showdesk { width: 13px; height: 32px; margin-left: 6px; background: linear-gradient(#d0d4d8, #8a9298); flex: none; }
.float { position: absolute; left: 1790px; top: 995px; width: 50px; height: 50px; border-radius: 50%; background: radial-gradient(circle at 40% 30%, #a8d8f4, #2f8ce0 70%); border: 2px solid #dfe8ee; box-sizing: border-box; color: #e8f2fa; font-size: 14px; line-height: 46px; text-align: center; z-index: 5; }
</style>

<style>
html, body { margin: 0; background: #000; }
</style>
